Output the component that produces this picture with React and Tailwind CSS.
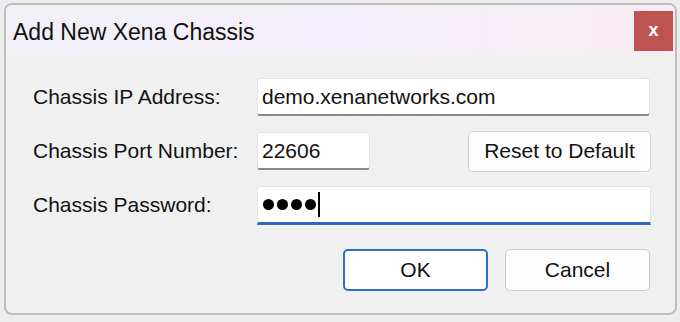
import React from "react";

function Field({ className = "", children }) {
  return (
    <div
      className={
        "flex items-center bg-white border border-[#e3e3e3] border-b-2 border-b-[#8a8a8a] rounded-[3px] pl-[4px] " +
        className
      }
    >
      {children}
    </div>
  );
}

export default function App() {
  const font = { fontFamily: '"Liberation Sans", Arial, sans-serif' };
  return (
    <div className="w-[680px] h-[322px] bg-[#ededed] pt-[3px] pl-[4px]" style={font}>
      <div className="w-[673px] h-[312px] border-2 border-[#bdbdbd] rounded-[8px] bg-[#f0f0f0] overflow-hidden flex flex-col">
        {/* title bar */}
        <div className="h-[50px] flex items-start bg-gradient-to-r from-[#f1f0f7] via-[#f3effa] to-[#f9ecf2]">
          <span className="ml-[7px] mt-[14px] text-[23px] leading-[26px] text-[#111]">
            Add New Xena Chassis
          </span>
          <button className="ml-auto mr-[2px] mt-[6px] w-[39px] h-[40px] bg-[#bd5452] flex items-center justify-center text-white font-bold text-[18px] leading-none pb-[3px]">
            x
          </button>
        </div>

        {/* body */}
        <div className="flex-1 pl-[27px] pr-[24px] pt-[15px] text-[21px] text-[#111]">
          <div className="h-[54px] flex items-center">
            <span className="w-[224px]">Chassis IP Address:</span>
            <Field className="w-[393px] h-[38px]">demo.xenanetworks.com</Field>
          </div>
          <div className="h-[54px] flex items-center">
            <span className="w-[224px]">Chassis Port Number:</span>
            <Field className="w-[113px] h-[38px]">22606</Field>
            <button className="ml-auto w-[183px] h-[41px] rounded-[5px] border border-[#d0d0d0] bg-[#fdfdfd] text-[21px]">
              Reset to Default
            </button>
          </div>
          <div className="h-[54px] flex items-center">
            <span className="w-[224px]">Chassis Password:</span>
            <div className="w-[394px] h-[39px] bg-white border border-[#e3e3e3] border-b-[3px] border-b-[#2f66bf] rounded-t-[3px] flex items-center pl-[5px] gap-[3px]">
              <span className="w-[11px] h-[11px] rounded-full bg-black" />
              <span className="w-[11px] h-[11px] rounded-full bg-black" />
              <span className="w-[11px] h-[11px] rounded-full bg-black" />
              <span className="w-[11px] h-[11px] rounded-full bg-black" />
              <span className="w-[2px] h-[25px] bg-black ml-[-1px]" />
            </div>
          </div>
          <div className="mt-[17px] flex justify-end gap-[17px] pr-[1px]">
            <button className="w-[145px] h-[42px] rounded-[5px] border-2 border-[#2c6fcb] bg-white text-[21px]">
              OK
            </button>
            <button className="w-[145px] h-[42px] rounded-[5px] border border-[#cccccc] bg-[#fdfdfd] text-[21px]">
              Cancel
            </button>
          </div>
        </div>
      </div>
    </div>
  );
}
